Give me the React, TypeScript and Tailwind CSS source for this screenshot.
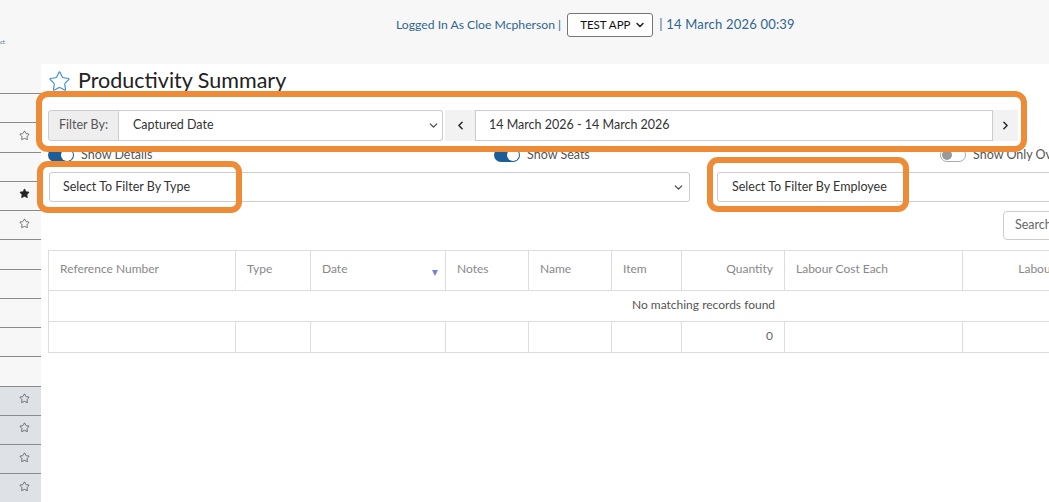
import React from 'react';
import { Star, ChevronDown, ChevronLeft, ChevronRight } from 'lucide-react';

const sidebarRows: Array<'none' | 'outline' | 'filled'> = [
  'none', 'outline', 'none', 'filled', 'outline', 'none', 'none', 'none', 'none', 'none',
  'outline', 'outline', 'outline', 'outline',
];

const columns = [
  { label: 'Reference Number', w: 187 },
  { label: 'Type', w: 75 },
  { label: 'Date', w: 135, sort: true },
  { label: 'Notes', w: 83 },
  { label: 'Name', w: 83 },
  { label: 'Item', w: 70 },
  { label: 'Quantity', w: 103, right: true, total: '0' },
  { label: 'Labour Cost Each', w: 178 },
  { label: 'Labour Cost', w: 131, right: true, total: '$0.00' },
  { label: 'Labour Total', w: 265, right: true, total: '$0.00' },
];

const Toggle = ({ on, label }: { on: boolean; label: string }) => (
  <div className="flex w-[446px] shrink-0 items-center gap-[7px]">
    {on ? (
      <div className="flex h-[14px] w-[26px] items-center justify-end rounded-full bg-[#1b5e98] pr-[1px]">
        <div className="h-[12px] w-[12px] rounded-full bg-white" />
      </div>
    ) : (
      <div className="flex h-[14px] w-[26px] items-center rounded-full border border-[#aaa] bg-white pl-[1px]">
        <div className="h-[10px] w-[10px] rounded-full bg-[#999]" />
      </div>
    )}
    <span className="text-[12.5px] leading-none text-[#555]">{label}</span>
  </div>
);

export default function App() {
  return (
    <div className="relative h-[502px] w-[1049px] overflow-hidden bg-[#f7f7f7] font-['Lato',sans-serif]">
      {/* Top bar */}
      <header className="flex h-[64px]">
        <div className="w-[41px] overflow-hidden pt-[39px]">
          <span className="block text-[6px] leading-none text-[#4c6f9a]">ct</span>
        </div>
        <div className="flex items-center self-start pl-[355px] pt-[13px] text-[#2f6690]">
          <span className="text-[12.2px]">Logged In As Cloe Mcpherson |</span>
          <div className="ml-[6px] flex h-[24px] w-[86px] items-center justify-between rounded-[3px] border border-[#767676] bg-white pl-[12px] pr-[6px] text-[11.5px] text-[#111]">
            <span>TEST APP</span>
            <ChevronDown size={12} strokeWidth={3} className="text-[#222]" />
          </div>
          <span className="ml-[6px] text-[13px] tracking-[0.2px]">| 14 March 2026 00:39</span>
        </div>
      </header>

      <div className="flex h-[438px]">
        {/* Sidebar */}
        <aside className="w-[41px] shrink-0 pt-[29px]">
          {sidebarRows.map((s, i) => (
            <div
              key={i}
              className={`flex h-[29.25px] items-center justify-end border-t border-[#8a8a8a] pb-[4px] pr-[11px] ${i >= 10 ? 'bg-[#dee2e7]' : ''}`}
            >
              {s !== 'none' && (
                <Star
                  size={11}
                  strokeWidth={1.4}
                  className="text-[#333]"
                  fill={s === 'filled' ? '#222' : 'none'}
                />
              )}
            </div>
          ))}
        </aside>

        {/* Main */}
        <main className="min-w-0 flex-1 overflow-hidden bg-white pl-[7px]">
          <div className="w-[1345px]">
            <div className="flex h-[34px] items-center gap-[7px]">
              <Star size={23} strokeWidth={1.2} className="text-[#3b8ee0]" />
              <h1 className="text-[21.5px] leading-none text-[#222]">Productivity Summary</h1>
            </div>

            {/* Filter row */}
            <div className="mt-[12px] flex h-[31px] items-stretch text-[12.5px] text-[#333]">
              <div className="flex w-[71px] items-center justify-center rounded-l-[3px] border border-[#ccc] bg-[#eee] text-[#555]">
                Filter By:
              </div>
              <div className="flex w-[324px] items-center justify-between rounded-r-[3px] border border-l-0 border-[#ccc] bg-white pl-[14px] pr-[2px]">
                <span>Captured Date</span>
                <ChevronDown size={13} strokeWidth={2.2} className="text-[#444]" />
              </div>
              <div className="ml-[2px] flex w-[30px] items-center justify-center bg-[#f2f2f2]">
                <ChevronLeft size={13} strokeWidth={2.6} className="text-[#222]" />
              </div>
              <div className="flex w-[518px] items-center border border-[#ccc] bg-white pl-[13px]">
                14 March 2026 - 14 March 2026
              </div>
              <div className="flex w-[25px] items-center justify-center bg-[#f2f2f2]">
                <ChevronRight size={13} strokeWidth={2.6} className="text-[#222]" />
              </div>
            </div>

            {/* Toggles */}
            <div className="mt-[7px] flex h-[14px]">
              <Toggle on label="Show Details" />
              <Toggle on label="Show Seats" />
              <Toggle on={false} label="Show Only Overdue" />
            </div>

            {/* Type / Employee */}
            <div className="mt-[10px] flex h-[30px] text-[12.5px] text-[#333]">
              <div className="w-[669px] shrink-0 pl-[1px] pr-[27px]">
                <div className="flex h-full items-center justify-between rounded-[3px] border border-[#ccc] bg-white pl-[13px] pr-[4px]">
                  <span>Select To Filter By Type</span>
                  <ChevronDown size={13} strokeWidth={2.2} className="text-[#444]" />
                </div>
              </div>
              <div className="w-[669px] shrink-0 pr-[27px]">
                <div className="flex h-full items-center justify-between rounded-[3px] border border-[#ccc] bg-white pl-[14px] pr-[4px]">
                  <span>Select To Filter By Employee</span>
                  <ChevronDown size={13} strokeWidth={2.2} className="text-[#444]" />
                </div>
              </div>
            </div>

            {/* Search */}
            <div className="mt-[9px] flex h-[29px] w-[1310px] justify-end">
              <div className="flex w-[355px] items-center rounded-[4px] border border-[#ccc] bg-white pl-[11px] text-[12.5px] text-[#666]">
                Search
              </div>
            </div>

            {/* Table */}
            <table className="mt-[10px] table-fixed border-collapse text-[12px]" style={{ width: 1310 }}>
              <colgroup>
                {columns.map((c) => (
                  <col key={c.label} style={{ width: c.w }} />
                ))}
              </colgroup>
              <thead>
                <tr className="h-[40px]">
                  {columns.map((c) => (
                    <th
                      key={c.label}
                      className={`relative border border-[#ddd] px-[11px] pb-[3px] font-normal text-[#888] ${c.right ? 'text-right' : 'text-left'}`}
                    >
                      {c.label}
                      {c.sort && (
                        <span className="absolute right-[7px] top-[19px] h-0 w-0 border-x-[3.5px] border-t-[6px] border-x-transparent border-t-[#7b7fd0]" />
                      )}
                    </th>
                  ))}
                </tr>
              </thead>
              <tbody>
                <tr className="h-[31px]">
                  <td colSpan={columns.length} className="border border-[#ddd] pb-[3px] text-center text-[#555]">
                    No matching records found
                  </td>
                </tr>
                <tr className="h-[31px]">
                  {columns.map((c) => (
                    <td
                      key={c.label}
                      className={`border border-[#ddd] px-[11px] pb-[2px] text-[#666] ${c.right ? 'text-right' : 'text-left'}`}
                    >
                      {c.total ?? ''}
                    </td>
                  ))}
                </tr>
              </tbody>
            </table>
          </div>
        </main>
      </div>

      {/* Highlight annotations */}
      <div className="pointer-events-none absolute left-[36px] top-[91px] h-[61px] w-[991px] rounded-[12px] border-[6px] border-[#ee8b37]" />
      <div className="pointer-events-none absolute left-[37px] top-[161px] h-[52px] w-[205px] rounded-[11px] border-[6px] border-[#ee8b37]" />
      <div className="pointer-events-none absolute left-[707px] top-[157px] h-[55px] w-[202px] rounded-[11px] border-[6px] border-[#ee8b37]" />
    </div>
  );
}
